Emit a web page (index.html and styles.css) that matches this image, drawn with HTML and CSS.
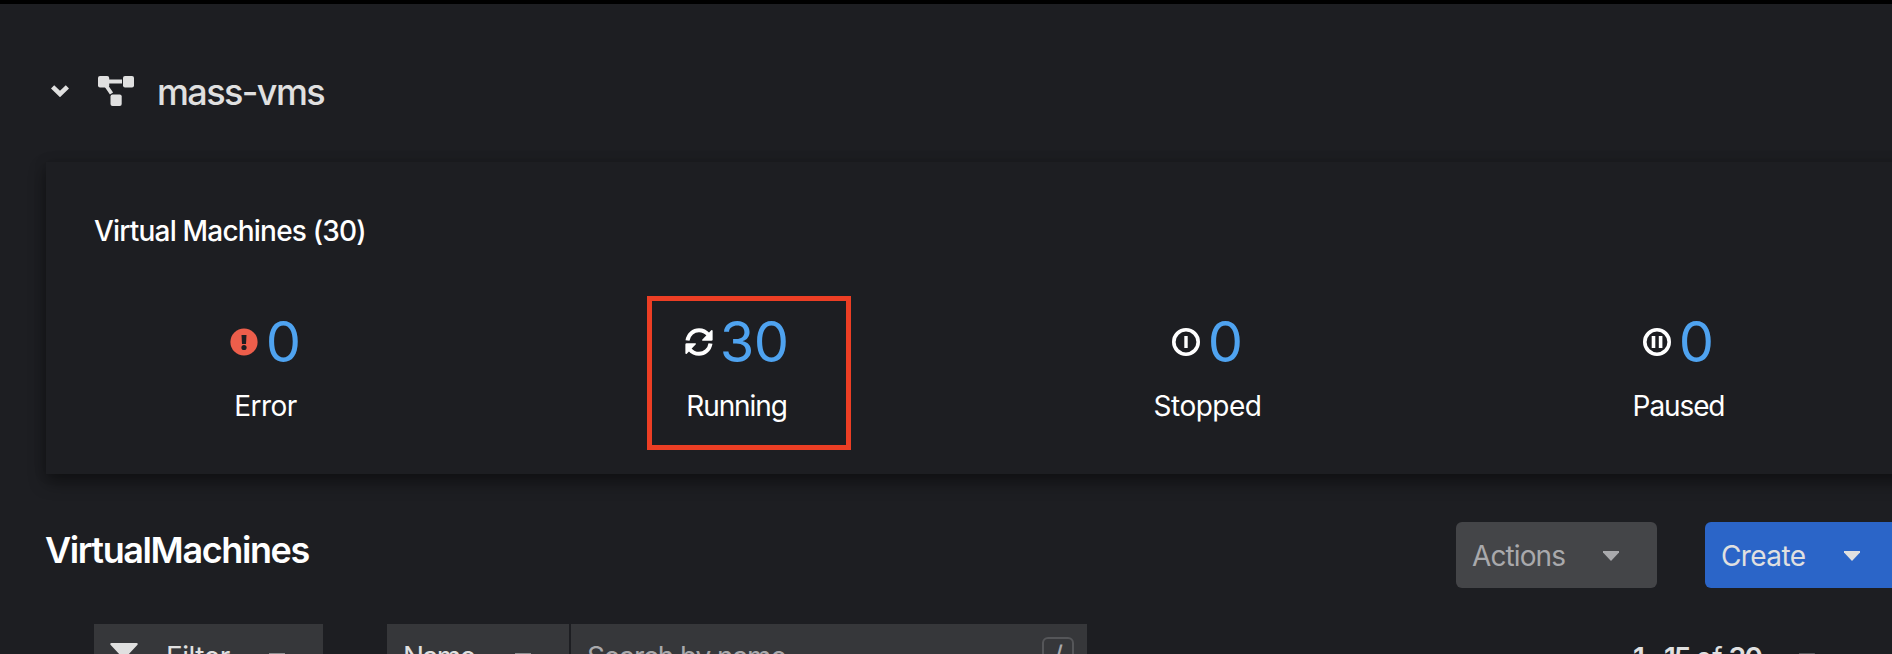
FILE: index.html
```html
<!DOCTYPE html>
<html lang="en">
<head>
<meta charset="utf-8">
<title>mass-vms</title>
<link rel="stylesheet" href="styles.css">
</head>
<body>
<header class="project">
  <svg class="chevron" viewBox="0 0 18 12"><path d="M1.600 1.800 9 9l7.400-7.200" fill="none" stroke="#e0e0e0" stroke-width="4.600"/></svg>
  <svg class="topology" viewBox="0 0 36 30"><path d="M8 5.500h16M7 8l6.500 9.500" stroke="#e0e0e0" stroke-width="3.800"/><g fill="#e0e0e0"><rect width="11.200" height="11.500" rx="2"/><rect x="25" width="11" height="11.500" rx="2"/><rect x="12.500" y="18.500" width="11.200" height="11.500" rx="2"/></g></svg>
  <span class="project-name">mass-vms</span>
</header>
<section class="card">
  <h2 class="card-title"><span>Virtual Machines (30)</span></h2>
  <div class="statuses">
    <div class="status error">
      <div class="count"><svg class="icon" viewBox="0 0 28 28"><circle cx="14" cy="14" r="13.600" fill="#ed5e4b"/><path d="M11.500 7h5l-.5 9h-4z" fill="#1d1e22"/><circle cx="14" cy="19.500" r="2.600" fill="#1d1e22"/></svg><span class="number">0</span></div>
      <div class="label"><span>Error</span></div>
    </div>
    <div class="status running">
      <div class="count"><svg class="icon" viewBox="0 0 28 28"><g id="arrow" fill="#fff"><path d="M2.500 12.500C3.500 6 8.500 2.200 14 2.200c4 0 7 1.700 9.200 4.400" fill="none" stroke="#fff" stroke-width="4"/><path d="M26.200 2.200q1.400-.8 1.400.8v8.500q0 1.200-1.200 1.200h-8.500q-1.600 0-.5-1.300z"/></g><use href="#arrow" transform="rotate(180 14 14)"/></svg><span class="number">30</span></div>
      <div class="label"><span>Running</span></div>
      <div class="highlight"></div>
    </div>
    <div class="status stopped">
      <div class="count"><svg class="icon" viewBox="0 0 28 28"><circle cx="14" cy="14" r="12.200" fill="none" stroke="#fff" stroke-width="3.600"/><path d="M14 8v12" stroke="#fff" stroke-width="3.400"/></svg><span class="number">0</span></div>
      <div class="label"><span>Stopped</span></div>
    </div>
    <div class="status paused">
      <div class="count"><svg class="icon" viewBox="0 0 28 28"><circle cx="14" cy="14" r="12.200" fill="none" stroke="#fff" stroke-width="3.600"/><path d="M10.500 8v12M17.600 8v12" stroke="#fff" stroke-width="3.600"/></svg><span class="number">0</span></div>
      <div class="label"><span>Paused</span></div>
    </div>
  </div>
</section>
<div class="list-header">
  <h1 class="list-title">VirtualMachines</h1>
  <button class="button actions"><span>Actions</span><i class="caret"></i></button>
  <button class="button create"><span>Create</span><i class="caret"></i></button>
</div>
<div class="toolbar">
  <div class="field filter"><svg class="funnel" viewBox="0 0 28 28"><path d="M1.500 0h25q2 .2.800 2L17 13v15l-6-5V13L.7 2Q-.5.200 1.500 0z" fill="#e0e0e0"/></svg><span class="field-text">Filter</span><i class="caret"></i></div>
  <div class="field name"><span class="field-text">Name</span><i class="caret"></i></div>
  <div class="field search"><span class="field-text">Search by name...</span><kbd class="key">/</kbd></div>
  <div class="pages"><span class="range">1 - 15</span><span class="total">of</span><span class="range">30</span><i class="caret"></i></div>
</div>
</body>
</html>
```

FILE: styles.css
```css
* { box-sizing: border-box; }
body {
  margin: 0;
  height: 654px;
  overflow: hidden;
  background: #1d1e22;
  border-top: 4px solid #000;
  color: #fff;
  font: 400 28px/40px Inter, "Liberation Sans", sans-serif;
}
.project { display: flex; height: 158px; padding: 72px 0 0 51px; color: #e0e0e0; }
.chevron { width: 18px; height: 12px; margin-top: 9px; }
.topology { width: 36px; height: 30px; margin: 0 23px 0 29px; }
.project-name { font-size: 36px; font-weight: 550; line-height: 40px; letter-spacing: -1.6px; margin-top: -4px; }
.card { width: 1894px; height: 312px; margin-left: 46px; padding: 49px 48px 0; box-shadow: 0 8px 16px rgba(0,0,0,.42), 0 0 12px rgba(0,0,0,.14); }
.card-title { margin: 0; font-size: 28px; font-weight: 550; line-height: 40px; letter-spacing: -.8px; }
.statuses { display: grid; grid-template-columns: repeat(4, 343px); column-gap: 128px; margin-top: 60px; }
.status { position: relative; text-align: center; }
.count { display: flex; justify-content: center; align-items: center; height: 62px; gap: 8px; }
.icon { width: 28px; height: 28px; flex: none; }
.number { color: #4fa3f0; font-size: 56px; font-weight: 400; line-height: 64px; }
.running .count { gap: 7px; }
.running .number { letter-spacing: -.6px; }
.label { margin-top: 13px; line-height: 40px; letter-spacing: -.5px; }
.running .label, .paused .label { letter-spacing: -1.1px; }
.highlight { position: absolute; left: 81.5px; top: -15px; width: 204px; height: 154px; border: 5px solid #ec3e24; }
.list-header { display: flex; height: 150px; padding: 48px 0 0 46px; }
.list-title { width: 1410px; flex: none; margin: 8px 0 0 -1px; padding-right: 1px; margin-right: 1px; font-size: 36px; font-weight: 600; line-height: 40px; letter-spacing: -1.4px; }
.button { display: flex; align-items: center; height: 66px; flex: none; padding: 0 38px 0 16px; justify-content: space-between; border: 0; border-radius: 6px; font: inherit; letter-spacing: -.6px; }
.button span { margin-top: 1px; }
.actions { width: 201px; margin-right: 48px; background: #444548; color: #a9a9ac; }
.actions span { letter-spacing: -.9px; }
.create { width: 193px; background: #2b65c8; color: #e0e0e0; }
.caret { width: 16px; height: 10px; background: currentColor; clip-path: polygon(0 0, 100% 0, 100% 14%, 50% 100%, 0 14%); }
.button .caret { margin-top: 2px; }
.toolbar { display: flex; height: 66px; padding-left: 94px; color: #e0e0e0; }
.field { display: flex; background: #36373a; flex: none; }
.field-text { margin-top: 13px; letter-spacing: -.4px; white-space: nowrap; }
.field .caret { margin-top: 29px; color: #8e8f91; }
.filter { width: 229px; margin-right: 64px; padding: 0 38px 0 16px; }
.filter .caret, .name .caret { margin-left: auto; }
.funnel { width: 28px; height: 28px; margin: 19px 28px 0 0; }
.name { width: 182px; padding: 0 38px 0 16px; }
.name .field-text { letter-spacing: -1.5px; }
.search { width: 516px; margin-left: 2px; padding: 0 13px 0 16px; justify-content: space-between; color: #a9a9ac; }
.search .field-text { letter-spacing: -1.1px; }
.key { width: 32px; height: 42px; margin-top: 13px; border: 2px solid #555659; border-radius: 6px; font: inherit; line-height: 34px; text-align: center; }
.pages { display: flex; margin-left: 546px; gap: 6px; padding-top: 14px; font-weight: 600; }
.pages .total { font-weight: 400; }
.pages .range { letter-spacing: -2px; }
.pages .caret { margin: 15px 0 0 32px; color: #55565a; }
```
